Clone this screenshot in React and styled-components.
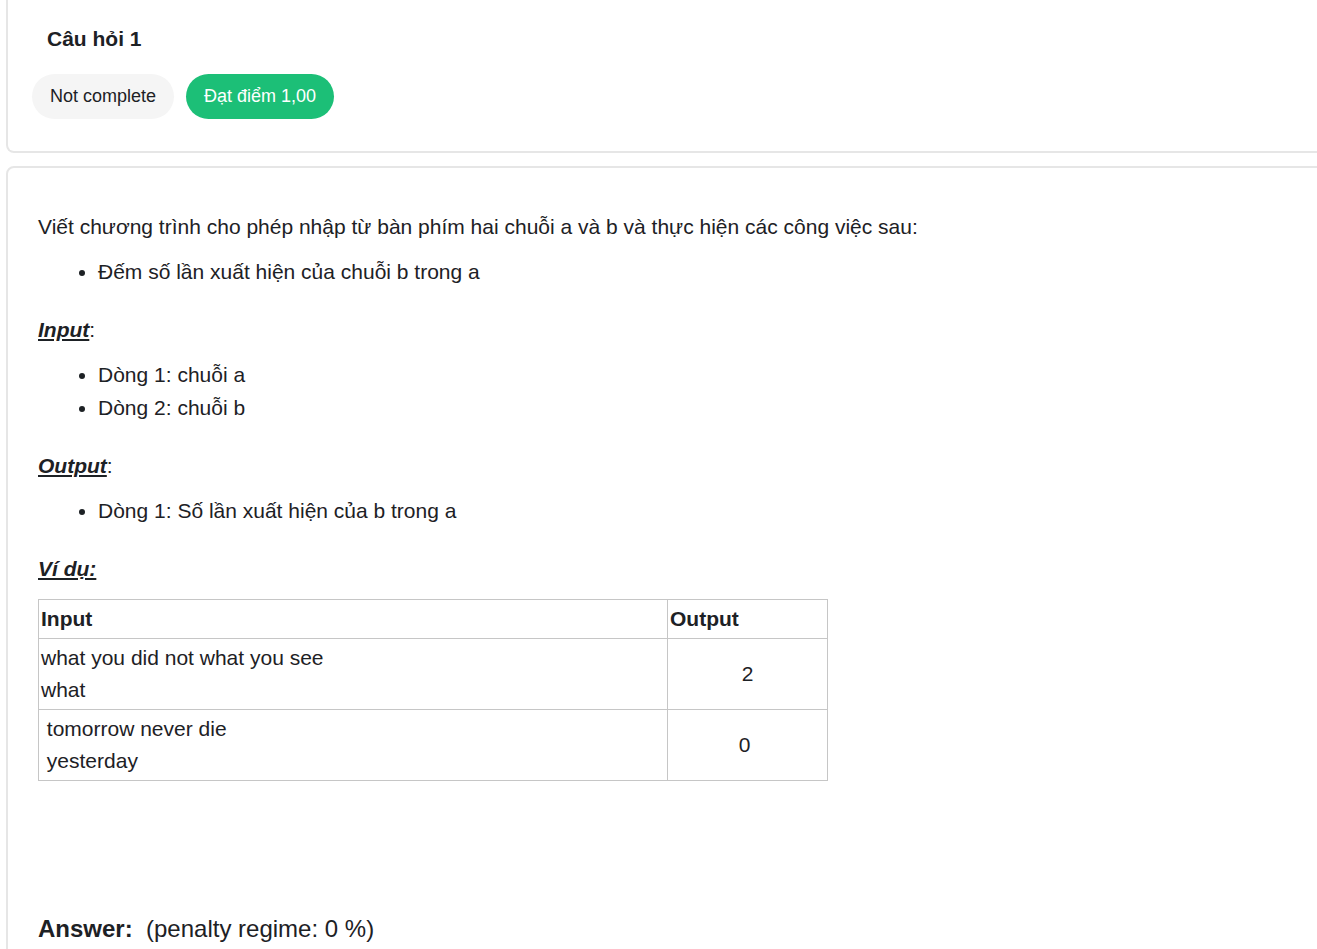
import React from 'react';
import styled, { createGlobalStyle } from 'styled-components';

const GlobalStyle = createGlobalStyle`
  body {
    margin: 0;
    background: #fff;
    overflow: hidden;
    font-family: "Liberation Sans", Arial, sans-serif;
    color: #1d2125;
  }
`;

const Page = styled.div({
  'width': '1340px',
  'padding-left': '6px',
  'display': 'flex',
  'flex-direction': 'column',
  'gap': '13px',
});

// cards
const Card = styled.section`
  border: 2px solid #e6e6e6;
  border-radius: 8px;
  background: #fff;
  ${(p) => p.$clipTop && 'border-top: none; border-top-left-radius: 0; border-top-right-radius: 0;'}
`;

const InfoCard = styled(Card)({
  'padding': '22px 24px 32px 24px',
});

const QuestionCard = styled(Card)({
  'padding': '42px 30px 60px 30px',
});

const Title = styled.h3({
  'margin': '0 0 18px 15px',
  'font-size': '21px',
  'line-height': '34px',
  'font-weight': 700,
});

const PillRow = styled.div({
  'display': 'flex',
  'gap': '12px',
});

const Pill = styled.span`
  display: inline-flex;
  align-items: center;
  height: 45px;
  padding: 0 18px;
  border-radius: 23px;
  font-size: 18px;
  background: ${(p) => (p.$ok ? '#1cbf77' : '#f5f5f5')};
  color: ${(p) => (p.$ok ? '#fff' : '#1d2125')};
`;

// question text
const Para = styled.p`
  margin: 0 0 ${(p) => p.$gap || '12px'} 0;
  font-size: 21px;
  line-height: 33px;
`;

const List = styled.ul({
  'margin': '0 0 25px 0',
  'padding-left': '60px',
  'font-size': '21px',
  'line-height': '33px',
});

const Label = styled.span`
  font-weight: bold;
  font-style: italic;
  text-decoration: underline;
`;

const Table = styled.table({
  'border-collapse': 'collapse',
  'width': '790px',
  'font-size': '21px',
  'line-height': '32px',
});

const Cell = styled.td`
  border: 1px solid #c6c6c6;
  padding: 3px 2px 3px 2px;
  vertical-align: middle;
  text-align: ${(p) => (p.$center ? 'center' : 'left')};
  font-weight: ${(p) => (p.$head ? 700 : 400)};
  width: ${(p) => p.$w || 'auto'};
`;

const Answer = styled.div({
  'margin-top': '132px',
  'font-size': '24px',
  'line-height': '32px',
  'white-space': 'pre',
});

const AnswerLabel = styled.b({
  'font-weight': 700,
});

const App = () => {
  const rows = [
    { input: ['what you did not what you see', 'what'], output: '2' },
    { input: ['\u00a0tomorrow never die', '\u00a0yesterday'], output: '0\u00a0' },
  ];

  return (
    <>
      <GlobalStyle />
      <Page>
        <InfoCard $clipTop>
          <Title>Câu hỏi 1</Title>
          <PillRow>
            <Pill>Not complete</Pill>
            <Pill $ok>Đạt điểm 1,00</Pill>
          </PillRow>
        </InfoCard>

        <QuestionCard>
          <Para>Viết chương trình cho phép nhập từ bàn phím hai chuỗi a và b và thực hiện các công việc sau:</Para>
          <List>
            <li>Đếm số lần xuất hiện của chuỗi b trong a</li>
          </List>

          <Para><Label>Input</Label>:</Para>
          <List>
            <li>Dòng 1: chuỗi a</li>
            <li>Dòng 2: chuỗi b</li>
          </List>

          <Para><Label>Output</Label>:</Para>
          <List>
            <li>Dòng 1: Số lần xuất hiện của b trong a</li>
          </List>

          <Para $gap="14px"><Label>Ví dụ:</Label></Para>
          <Table>
            <tbody>
              <tr>
                <Cell $head $w="624px">Input</Cell>
                <Cell $head>Output</Cell>
              </tr>
              {rows.map((r, i) => (
                <tr key={i}>
                  <Cell>
                    {r.input.map((line) => (
                      <div key={line}>{line}</div>
                    ))}
                  </Cell>
                  <Cell $center>{r.output}</Cell>
                </tr>
              ))}
            </tbody>
          </Table>

          <Answer>
            <AnswerLabel>Answer:</AnswerLabel>  (penalty regime: 0 %)
          </Answer>
        </QuestionCard>
      </Page>
    </>
  );
};

export default App;
